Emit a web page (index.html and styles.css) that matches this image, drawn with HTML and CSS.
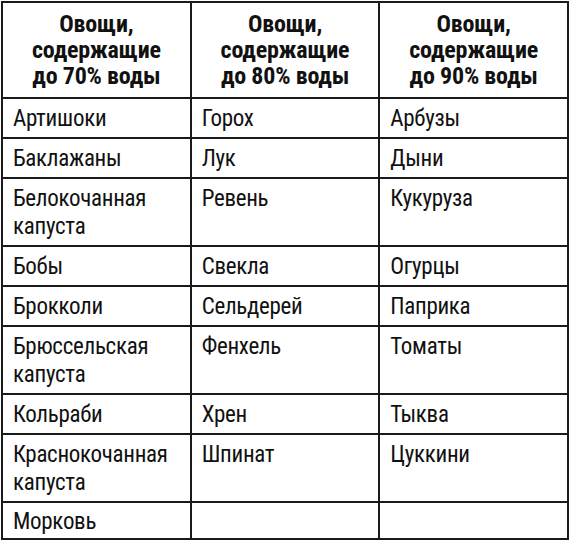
FILE: index.html
```html
<!DOCTYPE html>
<html lang="ru">
<head>
<meta charset="utf-8">
<title>Овощи</title>
<link rel="stylesheet" href="styles.css">
</head>
<body>
<table class="veg">
  <colgroup><col class="c"><col class="c"><col class="c"></colgroup>
  <thead>
    <tr>
      <th>Овощи,<br>содержащие<br>до 70% воды</th>
      <th>Овощи,<br>содержащие<br>до 80% воды</th>
      <th>Овощи,<br>содержащие<br>до 90% воды</th>
    </tr>
  </thead>
  <tbody>
    <tr><td>Артишоки</td><td>Горох</td><td>Арбузы</td></tr>
    <tr><td>Баклажаны</td><td>Лук</td><td>Дыни</td></tr>
    <tr><td>Белокочанная<br>капуста</td><td>Ревень</td><td>Кукуруза</td></tr>
    <tr><td>Бобы</td><td>Свекла</td><td>Огурцы</td></tr>
    <tr><td>Брокколи</td><td>Сельдерей</td><td>Паприка</td></tr>
    <tr><td>Брюссельская<br>капуста</td><td>Фенхель</td><td>Томаты</td></tr>
    <tr><td>Кольраби</td><td>Хрен</td><td>Тыква</td></tr>
    <tr><td>Краснокочанная<br>капуста</td><td>Шпинат</td><td>Цуккини</td></tr>
    <tr class="last"><td>Морковь</td><td></td><td></td></tr>
  </tbody>
</table>
</body>
</html>
```
FILE: styles.css
```css
html, body {
  margin: 0;
  padding: 0;
  background: #fff;
}
.veg {
  border-collapse: collapse;
  table-layout: fixed;
  width: 568px;
  margin: 1px 0 0 1px;
  font-family: "Roboto Condensed", "Liberation Sans", sans-serif;
  color: #111;
}
.veg .c {
  width: 33.333%;
}
.veg th,
.veg td {
  border: 2px solid #1a1a1a;
  text-align: left;
  vertical-align: top;
}
.veg th {
  font-weight: 700;
  font-size: 24px;
  line-height: 26px;
  letter-spacing: -0.2px;
  text-align: center;
  padding: 8px 4px 8px;
  height: 78px;
}
.veg td {
  font-size: 23px;
  line-height: 28px;
  letter-spacing: -0.3px;
  padding: 6px 10px 4px 10px;
}
.veg tr.last td {
  padding-top: 5px;
  padding-bottom: 2px;
}
```
